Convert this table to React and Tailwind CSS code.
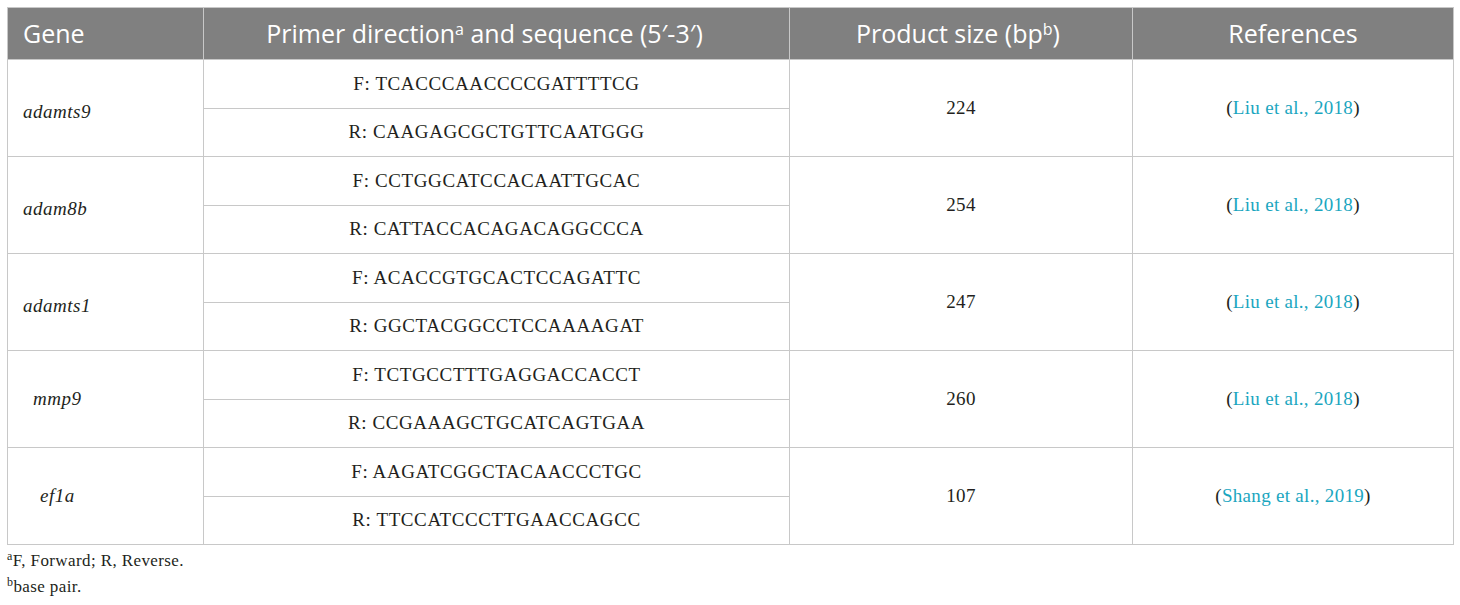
import React from 'react'

const rows = [
  { gene: 'adamts9', pad: 'pl-[15px] pt-[8px]', f: 'TCACCCAACCCCGATTTTCG', r: 'CAAGAGCGCTGTTCAATGGG', size: '224', ref: 'Liu et al., 2018' },
  { gene: 'adam8b', pad: 'pl-[15px] pt-[8px]', f: 'CCTGGCATCCACAATTGCAC', r: 'CATTACCACAGACAGGCCCA', size: '254', ref: 'Liu et al., 2018' },
  { gene: 'adamts1', pad: 'pl-[15px] pt-[8px]', f: 'ACACCGTGCACTCCAGATTC', r: 'GGCTACGGCCTCCAAAAGAT', size: '247', ref: 'Liu et al., 2018' },
  { gene: 'mmp9', pad: 'pl-[25px]', f: 'TCTGCCTTTGAGGACCACCT', r: 'CCGAAAGCTGCATCAGTGAA', size: '260', ref: 'Liu et al., 2018' },
  { gene: 'ef1a', pad: 'pl-[32px]', f: 'AAGATCGGCTACAACCCTGC', r: 'TTCCATCCCTTGAACCAGCC', size: '107', ref: 'Shang et al., 2019' },
]

const serif = "font-['Liberation_Serif',serif]"
const cell = 'border border-[#c8c8c8]'

export default function App() {
  return (
    <div className="bg-white w-[1460px] h-[605px] pt-[7px] pl-[7px]">
      <table className="table-fixed border-collapse w-[1446px] text-[#231f20]">
        <colgroup>
          <col className="w-[196px]" />
          <col className="w-[586px]" />
          <col className="w-[343px]" />
          <col className="w-[321px]" />
        </colgroup>
        <thead>
          <tr className="h-[52px] bg-[#808080] text-white font-['Open_Sans',sans-serif] text-[25px]">
            <th className={`${cell} font-normal text-left pl-[15px]`}>Gene</th>
            <th className={`${cell} font-normal text-center pr-[24px]`}>
              Primer direction<sup className="text-[16px]">a</sup> and sequence (5′-3′)
            </th>
            <th className={`${cell} font-normal text-center pr-[6px]`}>
              Product size (bp<sup className="text-[16px]">b</sup>)
            </th>
            <th className={`${cell} font-normal text-center`}>References</th>
          </tr>
        </thead>
        <tbody className={`${serif} text-[19px]`}>
          {rows.map(row => (
            <React.Fragment key={row.gene}>
              <tr className="h-[49px]">
                <td rowSpan={2} className={`${cell} ${row.pad} italic tracking-[0.5px]`}>{row.gene}</td>
                <td className={`${cell} text-center tracking-[0.6px]`}>F: {row.f}</td>
                <td rowSpan={2} className={`${cell} text-center tracking-[0.3px]`}>{row.size}</td>
                <td rowSpan={2} className={`${cell} text-center tracking-[0.3px]`}>
                  (<span className="text-[#1aa6bf]">{row.ref}</span>)
                </td>
              </tr>
              <tr className="h-[48px]">
                <td className={`${cell} text-center tracking-[0.6px]`}>R: {row.r}</td>
              </tr>
            </React.Fragment>
          ))}
        </tbody>
      </table>
      <div className={`${serif} text-[17px] text-[#231f20] leading-[26px] mt-[3px] tracking-[0.4px]`}>
        <p><sup className="text-[12px]">a</sup>F, Forward; R, Reverse.</p>
        <p><sup className="text-[12px]">b</sup>base pair.</p>
      </div>
    </div>
  )
}
